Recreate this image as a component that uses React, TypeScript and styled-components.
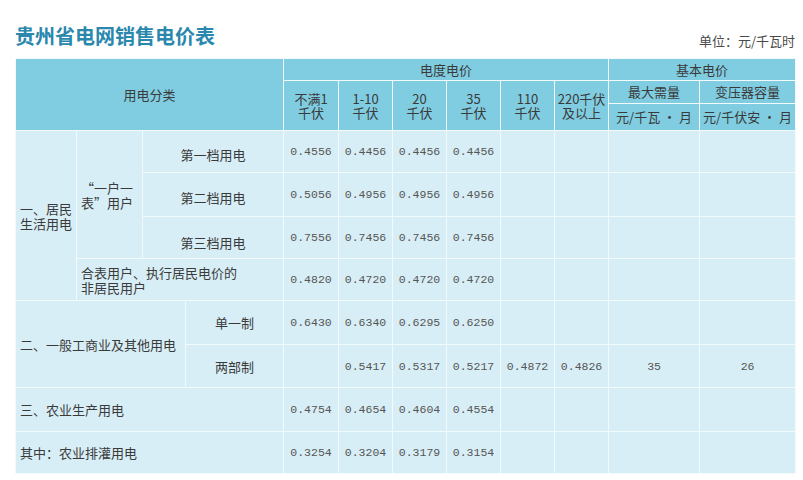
import React, { ReactElement } from "react";
import styled, { createGlobalStyle } from "styled-components";

/*
==========================
    Styled Components
==========================
*/
const GlobalStyle = createGlobalStyle`
  html, body {
    margin: 0;
    padding: 0;
    background: #ffffff;
  }
  body {
    font-family: "Noto Sans CJK SC", "Noto Sans", sans-serif;
  }
`;

const Page = styled.div`
  /* Size */
  width: 803px;
  height: 480px;
  padding: 22px 8px 0 15px;
  box-sizing: border-box;
  overflow: hidden;
`;

const TitleBar = styled.div`
  /* Layout */
  display: flex;
  justify-content: space-between;
  align-items: flex-start;
  width: 780px;
  height: 36px;
`;

const Title = styled.h1`
  margin: 0;
  font-size: 20px;
  font-weight: 700;
  line-height: 28px;
  letter-spacing: 0;
  color: #2a87ad;
`;

const Unit = styled.span`
  margin-top: 7px;
  font-size: 13px;
  line-height: 24px;
  color: #4a4a4a;
`;

const Table = styled.table`
  /* Size */
  width: 780px;
  table-layout: fixed;
  border-collapse: collapse;
  font-size: 13px;
  color: #3a3a3a;
`;

const HeadCell = styled.td<{ $h?: number }>`
  box-sizing: border-box;
  height: ${(p) => (p.$h ? `${p.$h}px` : "auto")};
  padding: 0;
  background: #80cde1;
  border: 1px solid #f2fafc;
  text-align: center;
  vertical-align: middle;
  line-height: 14px;
`;

const BodyCell = styled.td<{ $left?: boolean; $h?: number; $drop?: number }>`
  box-sizing: border-box;
  height: ${(p) => (p.$h ? `${p.$h}px` : "auto")};
  padding: ${(p) => (p.$drop ? `${p.$drop}px` : "0")} ${(p) => (p.$left ? "4px" : "0")} 0;
  background: #d8eef6;
  border: 1px solid #f2fafc;
  text-align: ${(p) => (p.$left ? "left" : "center")};
  vertical-align: middle;
  line-height: 15px;
`;

const NumCell = styled(BodyCell)`
  font-family: "Liberation Mono", "DejaVu Sans Mono", monospace;
  font-size: 11.5px;
  color: #555555;
`;

/*
==========================
    Data
==========================
*/
const widths = [61, 66, 43, 98, 55, 54, 54, 54, 54, 54, 91, 96];

const Values = ({ list }: { list: string[] }): ReactElement => (
  <>
    {Array.from({ length: 8 }).map((_, i) => (
      <NumCell key={i}>{list[i] ?? ""}</NumCell>
    ))}
  </>
);

/*
==========================
    React Element
==========================
*/
const App = (): ReactElement => {
  return (
    <Page>
      <GlobalStyle />
      <TitleBar>
        <Title>贵州省电网销售电价表</Title>
        <Unit>单位：元/千瓦时</Unit>
      </TitleBar>
      <Table>
        <colgroup>
          {widths.map((w, i) => (
            <col key={i} style={{ width: w }} />
          ))}
        </colgroup>
        <tbody>
          {/* Header */}
          <tr>
            <HeadCell rowSpan={3} colSpan={4}>
              用电分类
            </HeadCell>
            <HeadCell colSpan={6} $h={22}>
              电度电价
            </HeadCell>
            <HeadCell colSpan={2}>基本电价</HeadCell>
          </tr>
          <tr>
            <HeadCell rowSpan={2}>
              不满1
              <br />
              千伏
            </HeadCell>
            <HeadCell rowSpan={2}>
              1-10
              <br />
              千伏
            </HeadCell>
            <HeadCell rowSpan={2}>
              20
              <br />
              千伏
            </HeadCell>
            <HeadCell rowSpan={2}>
              35
              <br />
              千伏
            </HeadCell>
            <HeadCell rowSpan={2}>
              110
              <br />
              千伏
            </HeadCell>
            <HeadCell rowSpan={2}>
              220千伏
              <br />
              及以上
            </HeadCell>
            <HeadCell $h={23}>最大需量</HeadCell>
            <HeadCell>变压器容量</HeadCell>
          </tr>
          <tr>
            <HeadCell $h={27}>元/千瓦 · 月</HeadCell>
            <HeadCell>元/千伏安 · 月</HeadCell>
          </tr>

          {/* 一、居民生活用电 */}
          <tr>
            <BodyCell rowSpan={4} $left>
              一、居民
              <br />
              生活用电
            </BodyCell>
            <BodyCell rowSpan={3} $left>
              “一户一
              <br />
              表”用户
            </BodyCell>
            <BodyCell colSpan={2} $h={42} $drop={6}>
              第一档用电
            </BodyCell>
            <Values list={["0.4556", "0.4456", "0.4456", "0.4456"]} />
          </tr>
          <tr>
            <BodyCell colSpan={2} $h={44} $drop={6}>
              第二档用电
            </BodyCell>
            <Values list={["0.5056", "0.4956", "0.4956", "0.4956"]} />
          </tr>
          <tr>
            <BodyCell colSpan={2} $h={42} $drop={10}>
              第三档用电
            </BodyCell>
            <Values list={["0.7556", "0.7456", "0.7456", "0.7456"]} />
          </tr>
          <tr>
            <BodyCell colSpan={3} $left $h={42}>
              合表用户、执行居民电价的
              <br />
              非居民用户
            </BodyCell>
            <Values list={["0.4820", "0.4720", "0.4720", "0.4720"]} />
          </tr>

          {/* 二、一般工商业及其他用电 */}
          <tr>
            <BodyCell rowSpan={2} colSpan={3} $left>
              二、一般工商业及其他用电
            </BodyCell>
            <BodyCell $h={44}>单一制</BodyCell>
            <Values list={["0.6430", "0.6340", "0.6295", "0.6250"]} />
          </tr>
          <tr>
            <BodyCell $h={43}>两部制</BodyCell>
            <Values
              list={["", "0.5417", "0.5317", "0.5217", "0.4872", "0.4826", "35", "26"]}
            />
          </tr>

          {/* 三、农业生产用电 */}
          <tr>
            <BodyCell colSpan={4} $left $h={44}>
              三、农业生产用电
            </BodyCell>
            <Values list={["0.4754", "0.4654", "0.4604", "0.4554"]} />
          </tr>
          <tr>
            <BodyCell colSpan={4} $left $h={42}>
              其中：农业排灌用电
            </BodyCell>
            <Values list={["0.3254", "0.3204", "0.3179", "0.3154"]} />
          </tr>
        </tbody>
      </Table>
    </Page>
  );
};

export default App;
